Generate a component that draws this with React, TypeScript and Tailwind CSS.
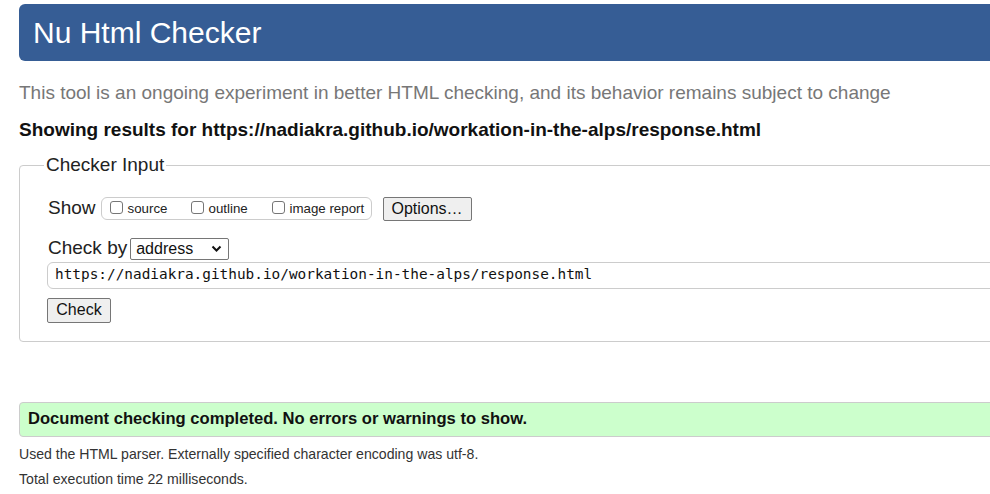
import React from "react";

function Box() {
  return (
    <span className="inline-block shrink-0 w-[13px] h-[13px] border border-[#767676] rounded-[3px] bg-white mr-[5px] mt-[-3px]" />
  );
}

export default function App() {
  return (
    <div className="w-[990px] h-[494px] overflow-hidden bg-white" style={{ fontFamily: '"Liberation Sans", Arial, sans-serif' }}>
      <div className="w-[1060px] pl-[19px] pt-[4px]">
        <div className="h-[57px] bg-[#365d95] rounded-[6px] flex items-center pl-[14px]">
          <h1 className="text-white text-[30px] leading-none">Nu Html Checker</h1>
        </div>
        <p className="mt-[21px] text-[19px] text-[#777] leading-[22px]">
          This tool is an ongoing experiment in better HTML checking, and its behavior remains subject to change
        </p>
        <p className="mt-[15px] text-[19px] font-bold text-[#111] leading-[22px]">
          Showing results for https://nadiakra.github.io/workation-in-the-alps/response.html
        </p>
        <fieldset className="mt-[10px] border border-[#ccc] rounded-[4px] pl-[28px] pt-[4px] h-[191px]">
          <legend className="text-[19px] text-[#222] px-[2px] ml-[-4px]">Checker Input</legend>
          <div className="flex items-center h-[26px] mt-[12px]">
            <span className="text-[19px] text-[#222] mr-[5px]">Show</span>
            <span className="h-[23px] w-[271px] border border-[#ccc] rounded-[6px] flex items-center pl-[8px] text-[13.3px] text-[#222] whitespace-nowrap">
              <span className="w-[81px] flex items-center"><Box />source</span>
              <span className="w-[81px] flex items-center"><Box />outline</span>
              <span className="flex items-center"><Box />image report</span>
            </span>
            <span className="ml-[11px] h-[24px] w-[89px] border border-[#767676] rounded-[2px] bg-[#efefef] flex items-center justify-center text-[16px] text-[#111]">Options…</span>
          </div>
          <div className="flex items-center mt-[16px] h-[22px]">
            <span className="text-[19px] text-[#222] mr-[3px]">Check by</span>
            <span className="h-[22px] w-[99px] border border-[#767676] rounded-[2px] flex items-center justify-between pl-[5px] pr-[6px] text-[16px] text-[#111]">
              address
              <svg width="11" height="8" viewBox="0 0 11 8"><path d="M1.5 1.5 L5.5 5.5 L9.5 1.5" stroke="#111" strokeWidth="2" fill="none" /></svg>
            </span>
          </div>
          <div className="mt-[2px] ml-[-1px] h-[27px] border border-[#ccc] rounded-l-[6px] flex items-center pl-[7px] text-[14.4px] text-[#111]" style={{ fontFamily: '"DejaVu Sans Mono", monospace' }}>
            https://nadiakra.github.io/workation-in-the-alps/response.html
          </div>
          <div className="mt-[9px] ml-[-1px] h-[25px] w-[64px] border border-[#767676] rounded-[2px] bg-[#efefef] flex items-center justify-center text-[16px] text-[#111]">Check</div>
        </fieldset>
        <div className="mt-[60px] h-[35px] bg-[#ccffcc] border border-[#ccc] rounded-[4px] flex items-center pl-[8px] text-[16.6px] font-bold text-[#111]">
          Document checking completed. No errors or warnings to show.
        </div>
        <p className="mt-[7px] text-[14.1px] text-[#333] leading-[20px]">Used the HTML parser. Externally specified character encoding was utf-8.</p>
        <p className="mt-[5px] text-[14.1px] text-[#333] leading-[20px]">Total execution time 22 milliseconds.</p>
      </div>
    </div>
  );
}
